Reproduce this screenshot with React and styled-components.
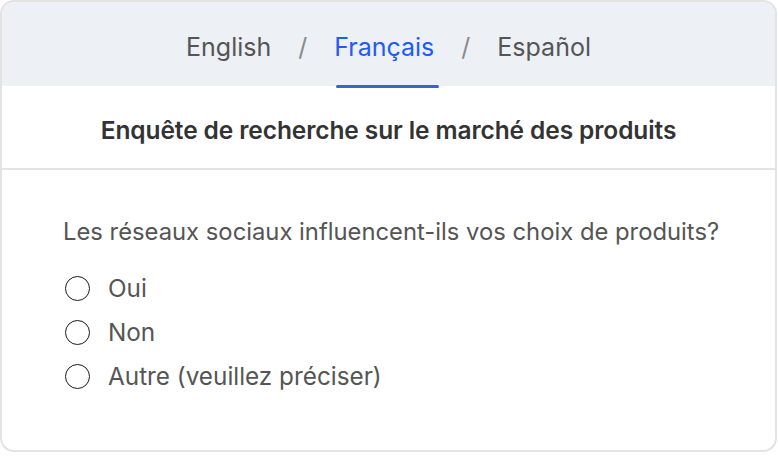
import React, { useState } from "react";
import styled, { createGlobalStyle } from "styled-components";

const GlobalStyle = createGlobalStyle`
  html, body {
    margin: 0;
    padding: 0;
    background: #ffffff;
  }
  body {
    font-family: Inter, "Liberation Sans", sans-serif;
  }
`;

const Card = styled.div`
  box-sizing: border-box;
  width: 777px;
  height: 452px;
  border: 2px solid #e3e3e3;
  border-radius: 14px;
  overflow: hidden;
  background: #fff;
`;

const LangBar = styled.nav`
  height: 79px;
  background: #edf0f5;
  display: flex;
  justify-content: center;
  align-items: center;
  gap: 25px;
  padding-top: 5px;
`;

const Lang = styled.button`
  position: relative;
  background: none;
  border: none;
  padding: 0 2px;
  font-family: inherit;
  font-size: 25px;
  color: ${(props) => (props.active ? "#1f5bf6" : "#555555")};
  cursor: pointer;
  &::after {
    content: "";
    display: ${(props) => (props.active ? "block" : "none")};
    position: absolute;
    left: 4px;
    right: -3px;
    bottom: -26px;
    height: 3px;
    border-radius: 2px;
    background: #3d63c9;
  }
`;

const Slash = styled.span`
  font-size: 25px;
  color: #8a8a8a;
`;

const Title = styled.h1`
  margin: 0;
  height: 84px;
  padding-top: 5px;
  box-sizing: border-box;
  display: flex;
  align-items: center;
  justify-content: center;
  font-size: 24.5px;
  font-weight: 600;
  letter-spacing: -0.1px;
  color: #333333;
  border-bottom: 2px solid #e4e4e4;
`;

const Body = styled.div`
  padding: 47px 0 0 61px;
`;

const Question = styled.p`
  margin: 0 0 28px;
  font-size: 23.8px;
  color: #555555;
`;

const Options = styled.div`
  display: flex;
  flex-direction: column;
  gap: 16px;
`;

const Option = styled.label`
  display: flex;
  align-items: center;
  gap: 18px;
  height: 28px;
  font-size: 24.3px;
  color: #555555;
  cursor: pointer;
`;

const Radio = styled.span`
  box-sizing: border-box;
  width: 25px;
  height: 25px;
  margin-left: 2px;
  border-radius: 50%;
  border: 1.8px solid #1a1a1a;
  display: flex;
  align-items: center;
  justify-content: center;
  &::after {
    content: "";
    width: 13px;
    height: 13px;
    border-radius: 50%;
    background: #1f5bf6;
    display: ${(props) => (props.checked ? "block" : "none")};
  }
`;

const langs = ["English", "Français", "Español"];
const choices = ["Oui", "Non", "Autre (veuillez préciser)"];

const App = () => {
  const [lang, setLang] = useState("Français");
  const [choice, setChoice] = useState(null);

  return (
    <>
      <GlobalStyle />
      <Card>
        <LangBar>
          {langs.map((l, i) => (
            <React.Fragment key={l}>
              {i > 0 && <Slash>/</Slash>}
              <Lang active={lang === l} onClick={() => setLang(l)}>
                {l}
              </Lang>
            </React.Fragment>
          ))}
        </LangBar>
        <Title>Enquête de recherche sur le marché des produits</Title>
        <Body>
          <Question>
            Les réseaux sociaux influencent-ils vos choix de produits?
          </Question>
          <Options>
            {choices.map((c) => (
              <Option key={c} onClick={() => setChoice(c)}>
                <Radio checked={choice === c} />
                {c}
              </Option>
            ))}
          </Options>
        </Body>
      </Card>
    </>
  );
};

export default App;
